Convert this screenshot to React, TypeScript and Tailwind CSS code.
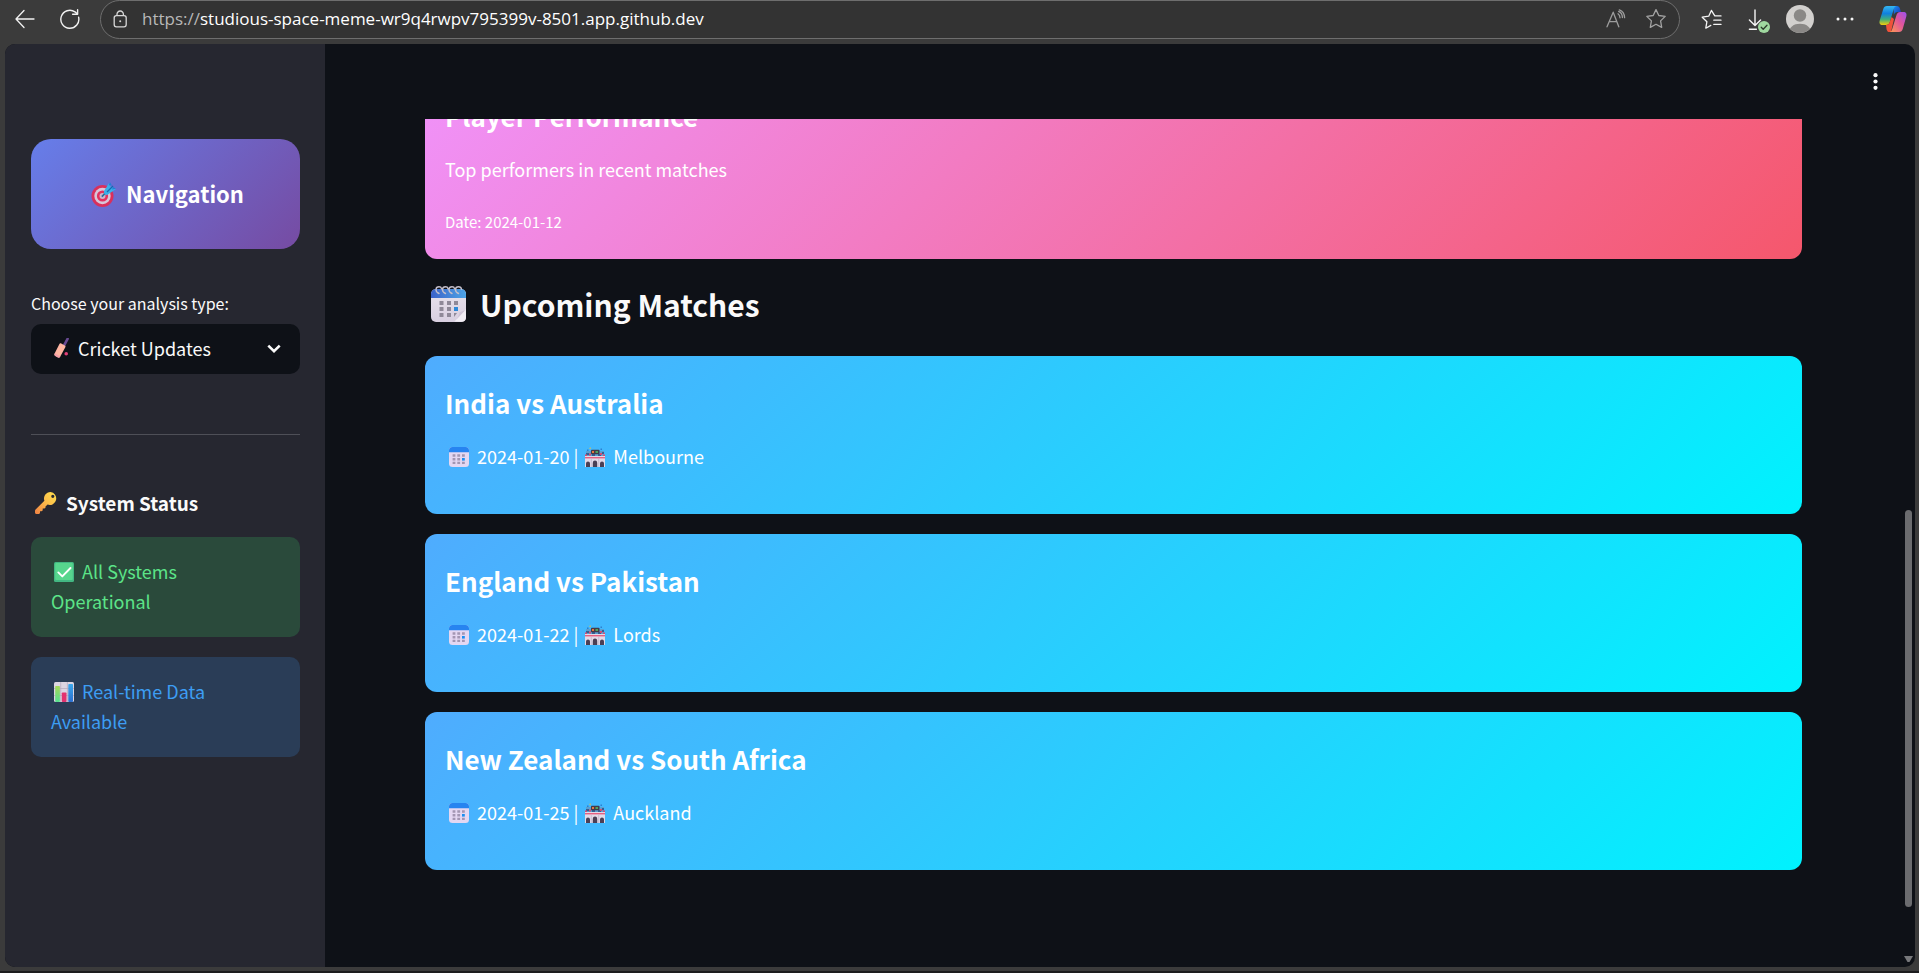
import type { ReactNode } from "react";

const matches = [
  { title: "India vs Australia", date: "2024-01-20", venue: "Melbourne" },
  { title: "England vs Pakistan", date: "2024-01-22", venue: "Lords" },
  { title: "New Zealand vs South Africa", date: "2024-01-25", venue: "Auckland" },
];

const analysisTypes = ["Cricket Updates"];

function BackIcon() {
  return (
    <svg className="size-5" viewBox="0 0 20 20" fill="none" stroke="#f2f2f2" strokeWidth="1.3" strokeLinecap="round" strokeLinejoin="round">
      <path d="M19 10H1.5M9 1.5L1 10l8 8.5" />
    </svg>
  );
}

function ReloadIcon() {
  return (
    <svg className="size-5" viewBox="0 0 20 20" fill="none" stroke="#f2f2f2" strokeWidth="1.4" strokeLinecap="round" strokeLinejoin="round">
      <path d="M18.6 8.2a9 9 0 1 1-3.6-5.3l2.4 2" />
      <path d="M17.6.8v4.4h-5" />
    </svg>
  );
}

function LockIcon() {
  return (
    <svg className="h-[18px] w-4" viewBox="0 0 16 18" fill="none" stroke="#d8d8d8" strokeWidth="1.3">
      <rect x="2.2" y="5.600" width="12" height="11.200" rx="2.200" />
      <path d="M5 5.600V4.200a3.200 3.200 0 0 1 6.400 0v1.400" />
      <circle cx="8.2" cy="11.2" r="1" fill="#d8d8d8" stroke="none" />
    </svg>
  );
}

function ReadAloudIcon() {
  return (
    <svg className="size-5" viewBox="0 0 20 20" fill="none" stroke="#9d9d9d" strokeWidth="1.3" strokeLinecap="round" strokeLinejoin="round">
      <path d="M1 17.8L7.2 3.2l5.6 14.6M3.4 12.6h7.4" />
      <path d="M12 4.8c1.3.9 2 2.2 2 4M12.6 2.4c2.4 1 3.8 3.4 3.8 6.2M13.4.8c3 1 5 3.6 5.2 7.8" />
    </svg>
  );
}

function StarIcon() {
  return (
    <svg className="size-[22px]" viewBox="0 0 22 22" fill="none" stroke="#a2a2a2" strokeWidth="1.3" strokeLinejoin="round">
      <path d="M11 1.6l2.8 5.9 6.4.9-4.6 4.5 1.1 6.5-5.7-3.1-5.7 3.1 1.1-6.5L1.8 8.4l6.4-.9z" />
    </svg>
  );
}

function FavoritesIcon() {
  return (
    <svg className="h-[21px] w-[21px]" viewBox="0 0 21 21" fill="none" stroke="#f5f5f5" strokeWidth="1.3" strokeLinecap="round" strokeLinejoin="round">
      <path d="M20 6.9h-6.2L10.4 1.4 7.7 7.2l-6.5 1 4.7 4.5-1.1 6.5 5-2.8" />
      <path d="M12.8 11.2H20M12.8 15.4H20" />
    </svg>
  );
}

function DownloadIcon() {
  return (
    <svg className="h-6 w-[22px]" viewBox="0 0 22 24" fill="none" strokeLinecap="round" strokeLinejoin="round">
      <path d="M7 1v15.4M1.4 11L7 16.6l5.6-5.6M1.4 20.2h7" stroke="#f5f5f5" strokeWidth="1.4" />
      <circle cx="16" cy="18" r="6" fill="#9fd89f" />
      <path d="M13.2 18.2l2 2 3.8-4" stroke="#2b3b2b" strokeWidth="1.3" />
    </svg>
  );
}

function AvatarIcon() {
  return (
    <svg className="size-7" viewBox="0 0 28 28">
      <defs>
        <clipPath id="avatar"><circle cx="14" cy="14" r="14" /></clipPath>
      </defs>
      <g clipPath="url(#avatar)">
        <rect width="28" height="28" fill="#d2d0ce" />
        <circle cx="14" cy="10.5" r="6.2" fill="#8a8886" />
        <path d="M2.5 28c1-6 5-9.300 11.500-9.300S24.500 22 25.500 28z" fill="#8a8886" />
      </g>
    </svg>
  );
}

function MoreIcon() {
  return (
    <svg className="h-1 w-[18px]" viewBox="0 0 18 4" fill="#f5f5f5">
      <circle cx="2" cy="2" r="1.500" /><circle cx="9" cy="2" r="1.500" /><circle cx="16" cy="2" r="1.500" />
    </svg>
  );
}

function CopilotIcon() {
  return (
    <svg className="size-7" viewBox="0 0 28 28">
      <defs>
        <linearGradient id="cpA" x1="0" y1="0" x2="0" y2="1">
          <stop offset="0" stopColor="#35b7f2" /><stop offset=".4" stopColor="#0f80df" /><stop offset=".7" stopColor="#3fae7c" /><stop offset="1" stopColor="#f5cd0a" />
        </linearGradient>
        <linearGradient id="cpB" x1="1" y1="0" x2="0" y2="1">
          <stop offset="0" stopColor="#9b51f0" /><stop offset=".45" stopColor="#e0559c" /><stop offset="1" stopColor="#ff9a50" />
        </linearGradient>
        <linearGradient id="cpC" x1="0" y1="0" x2="1" y2="1">
          <stop offset="0" stopColor="#1c8ef0" /><stop offset="1" stopColor="#1533b8" />
        </linearGradient>
      </defs>
      <path d="M14.500 1h3.300c1.800 0 2.600 1 3.100 2.600l1 3.400h-3.200c-2.200 0-3.200 1.200-3.800 3z" fill="url(#cpC)" />
      <path d="M8 1h9.200c-1.300.3-2 1.500-2.500 3.200L10.800 17c-.7 2.200-1.900 3-4 3H3.600C.8 20 0 18 .7 15.500L4.200 4.200C4.900 2 6 1 8 1z" fill="url(#cpA)" />
      <path d="M7 20c2.200 0 3.200-1.200 3.800-3l1.700-5 2.500 2-3 13h-1.500c-1.600 0-2.400-1-2.900-2.600z" fill="#f0523a" />
      <path d="M20 27h-9.200c1.300-.3 2-1.500 2.500-3.200L17.200 11c.7-2.800 1.900-4 4-4h3.200c2.800 0 3.600 2 2.900 4.500l-3.500 12.300C23.100 26 22 27 20 27z" fill="url(#cpB)" />
    </svg>
  );
}

function TargetIcon() {
  return (
    <svg className="ml-1 mr-[10px] inline-block size-[25px] align-[-4px]" viewBox="0 0 25 25">
      <circle cx="11.500" cy="14" r="11" fill="#d9305c" />
      <circle cx="11.500" cy="14" r="8.200" fill="#d8c5d8" />
      <circle cx="11.500" cy="14" r="5.600" fill="#e2325f" />
      <circle cx="11.500" cy="14" r="3" fill="#cbb6cc" />
      <path d="M10.800 14.600l6.500-6.500" stroke="#276a9c" strokeWidth="1.600" />
      <path d="M13 9l5.300-8.200 1 3.800L25 7l-8.500 5.800c-2.200.9-4.200-1.300-3.500-3.800z" fill="#3bafe8" />
      <path d="M16 10l6-6" stroke="#1769b1" strokeWidth="1.200" />
      <path d="M21 3.500L19 .3l-1.200 3M22 5l3 1.800-4 .8" fill="#2380d6" />
    </svg>
  );
}

function BatIcon() {
  return (
    <svg className="h-5 w-4" viewBox="0 0 16 20">
      <path d="M10.200 7.200L13.600.8" stroke="#684a92" strokeWidth="2.600" strokeLinecap="round" />
      <path d="M5.300 6.200c.5-1 1.100-1 1.900-.6l3.600 1.900c.8.400.9 1 .5 1.800l-5 9.300c-.5 1-1.500 1.200-2.500.7l-2.500-1.400c-1-.5-1.200-1.400-.7-2.300z" fill="#ffb6a2" />
      <path d="M.9 15.200l5.500 3.200c-.6 1.200-1.500 1.500-2.600 1L1.300 18c-1-.5-1.200-1.400-.4-2.800z" fill="#f3a0aa" />
      <circle cx="12.200" cy="15.800" r="1.800" fill="#e4417a" />
    </svg>
  );
}

function KeyIcon() {
  return (
    <svg className="ml-1 mr-[9px] inline-block size-[22px] align-[-3px]" viewBox="0 0 22 22">
      <defs>
        <linearGradient id="key" x1="1" y1="0" x2="0" y2="1">
          <stop offset="0" stopColor="#ffe14d" /><stop offset=".5" stopColor="#fcb94a" /><stop offset="1" stopColor="#ef8043" />
        </linearGradient>
      </defs>
      <path fillRule="evenodd" d="M15.500 0A6.500 6.500 0 0 0 9.400 8.800L.6 17.600a2 2 0 0 0-.6 1.500v1.400C0 21.400.6 22 1.500 22h2c.9 0 1.500-.6 1.500-1.500v-1.200h1.500c.7 0 1.200-.5 1.200-1.200v-1.600h1.600c.8 0 1.200-.5 1.200-1.200v-.7l2.100-2A6.500 6.500 0 1 0 15.500 0zm2.300 2.700a1.600 1.600 0 1 1 0 3.200 1.600 1.600 0 0 1 0-3.200z" fill="url(#key)" />
    </svg>
  );
}

function CheckIcon() {
  return (
    <svg className="ml-[3px] mr-2 inline-block size-5 align-[-3px]" viewBox="0 0 20 20">
      <rect width="20" height="20" rx="1.500" fill="#43b783" />
      <rect x="1.200" y="1" width="17.600" height="17" rx="1" fill="#57d68d" />
      <path d="M4.300 10.400l4 4L16.500 6" fill="none" stroke="#fff" strokeWidth="1.900" strokeLinecap="round" strokeLinejoin="round" />
    </svg>
  );
}

function ChartIcon() {
  return (
    <svg className="ml-[3px] mr-2 inline-block size-5 align-[-3px]" viewBox="0 0 20 20">
      <defs>
        <linearGradient id="barG" x1="0" y1="0" x2="0" y2="1"><stop offset="0" stopColor="#a6d957" /><stop offset="1" stopColor="#55e090" /></linearGradient>
        <linearGradient id="barB" x1="0" y1="0" x2="0" y2="1"><stop offset="0" stopColor="#3ba8ec" /><stop offset="1" stopColor="#2b6fd0" /></linearGradient>
      </defs>
      <rect width="20" height="20" rx="1.500" fill="#dcd5e2" />
      <path d="M0 6.500h20M0 13.500h20M6.700 0v20M13.400 0v20" stroke="#b5a9bd" strokeWidth=".7" />
      <rect x="1.200" y="4" width="4.700" height="16" rx=".8" fill="url(#barG)" />
      <rect x="7.800" y="10.500" width="4.700" height="9.500" rx=".8" fill="#e2326f" />
      <rect x="14.300" y="2" width="4.700" height="18" rx=".8" fill="url(#barB)" />
    </svg>
  );
}

function SpiralCalendarIcon() {
  return (
    <svg className="ml-[6px] mr-[14px] inline-block h-9 w-[35px] align-[-5px]" viewBox="0 0 35 36">
      <defs>
        <linearGradient id="spiral" x1="0" y1="0" x2="1" y2="0"><stop offset="0" stopColor="#3c62c9" /><stop offset="1" stopColor="#4da4e6" /></linearGradient>
        <linearGradient id="paper" x1="0" y1="0" x2="0" y2="1"><stop offset="0" stopColor="#e9e3ec" /><stop offset="1" stopColor="#d8cfe0" /></linearGradient>
      </defs>
      <path d="M0 8a5 5 0 0 1 5-5h25a5 5 0 0 1 5 5v23a5 5 0 0 1-5 5H5a5 5 0 0 1-5-5z" fill="url(#paper)" />
      <path d="M0 12V8a5 5 0 0 1 5-5h25a5 5 0 0 1 5 5v4z" fill="url(#spiral)" />
      <path d="M34.800 23L23.500 35.500 31 35.800a4.500 4.500 0 0 0 4-4.500z" fill="#f1edf4" />
      <path d="M34.500 24l-6 2.200c-.4 3-1.800 6-5 9.300z" fill="#cfc5d7" />
      <g fill="#8f8998">
        <path d="M8.500 15h4v4h-4zM16 15h4v4h-4zM23 15h4v4h-4zM8.500 21h4v4h-4zM16 21h4v4h-4zM8.500 27h4v4h-4zM16 27h4v4h-4zM23 27h3l-3 4z" />
      </g>
      <rect x="23" y="21" width="4" height="4" fill="#2f8ad8" />
      <g fill="none" stroke="#c5bfca" strokeWidth="1.400" strokeLinecap="round">
        <path d="M8 7.500C3.500 5.500 4.500.8 8 .8c1.500 0 2.300.8 2.600 1.900M14.500 7.500c-4.500-2-3.500-6.700 0-6.700 1.500 0 2.300.8 2.600 1.900M21 7.500c-4.500-2-3.500-6.700 0-6.700 1.500 0 2.300.8 2.600 1.900M27.500 7.500c-4.500-2-3.500-6.700 0-6.700 1.500 0 2.800 1 3 2.400" />
      </g>
    </svg>
  );
}

function CalendarIcon() {
  return (
    <svg className="ml-1 mr-2 inline-block size-5 align-[-3px]" viewBox="0 0 20 20">
      <rect width="20" height="20" rx="3.500" fill="#e4d7f2" />
      <path d="M0 5.300V3.500A3.500 3.500 0 0 1 3.500 0h13A3.500 3.500 0 0 1 20 3.500v1.800z" fill="#2784f0" />
      <path d="M3.600 7.200h2.800v2.600H3.600zM8.300 7.200h2.800v2.600H8.300zM13 7.200h2.800v2.600H13zM3.600 11h2.800v2.600H3.600zM8.300 11h2.800v2.600H8.300zM3.600 14.800h2.800v2.300H3.600zM8.300 14.800h2.800v2.300H8.300zM13 14.800h2.800v2.300H13z" fill="#a396b3" />
      <path d="M13 11h2.800v2.600H13z" fill="#1b8ef0" />
    </svg>
  );
}

function StadiumIcon() {
  return (
    <svg className="ml-[3px] mr-2 inline-block size-5 align-[-3px]" viewBox="0 0 20 20">
      <path d="M1 4h18v6H1z" fill="#5a9fd0" />
      <path d="M1 6h3v2H1zM7 7h3v2H7zM13 7h3v2h-3zM17 5h2v2h-2z" fill="#365f92" />
      <path d="M0 7.500h2v2H0zM4 6.500h2v2H4zM15 6h2v2h-2zM18 7.500h2v2h-2z" fill="#d34c75" />
      <rect x="6" y="2.700" width="8.500" height="4.500" rx=".8" fill="#443b49" />
      <path d="M7 4h2v2H7z" fill="#e7743f" />
      <path d="M10.500 4h2.500v2h-2.500z" fill="#50a35f" />
      <path d="M4 1.300l1.500-1 .3 2z" fill="#f3be38" />
      <path d="M2 2.500h1.500V4H2zM15.500 1.500H17V3h-1.500z" fill="#2c7fd0" />
      <rect y="9" width="20" height="11" fill="#e3dae8" />
      <rect y="10" width="20" height="1.400" fill="#e65f80" />
      <path d="M1 20v-3.500a2 2 0 0 1 4 0V20zM7.800 20v-4.200a2.200 2.200 0 0 1 4.400 0V20zM15 20v-3.500a2 2 0 0 1 4 0V20z" fill="#4b3f55" />
      <path d="M6.300 12v8M13.700 12v8" stroke="#c0b3c8" strokeWidth=".7" />
    </svg>
  );
}

function IconButton({ label, className = "", children }: { label: string; className?: string; children: ReactNode }) {
  return (
    <button type="button" aria-label={label} className={`flex shrink-0 items-center justify-center ${className}`}>
      {children}
    </button>
  );
}

function BrowserBar() {
  return (
    <header className="flex h-11 shrink-0 items-start bg-[#3b3b3b]">
      <IconButton label="Back" className="ml-[15px] mt-2 h-[22px] w-5"><BackIcon /></IconButton>
      <IconButton label="Reload" className="ml-[25px] mt-2 h-[22px] w-5"><ReloadIcon /></IconButton>
      <div className="ml-5 flex h-[39px] min-w-0 flex-1 items-center rounded-full border border-[#6e6e6e] bg-[#333333] pb-[2px] pl-[11px] pr-3">
        <LockIcon />
        <p className="ml-[14px] min-w-0 flex-1 truncate font-['Open_Sans',sans-serif] text-[17px] leading-6 text-white">
          <span className="text-[#b8b8b8]">https://</span>studious-space-meme-wr9q4rwpv795399v-8501.app.github.dev
        </p>
        <IconButton label="Read aloud"><ReadAloudIcon /></IconButton>
        <IconButton label="Add to favorites" className="ml-[19px]"><StarIcon /></IconButton>
      </div>
      <div className="flex h-[38px] items-center pl-[21px] pr-3">
        <IconButton label="Favorites"><FavoritesIcon /></IconButton>
        <IconButton label="Downloads" className="ml-[26px] mt-1"><DownloadIcon /></IconButton>
        <IconButton label="Profile" className="ml-[16px]"><AvatarIcon /></IconButton>
        <IconButton label="More" className="ml-[22px]"><MoreIcon /></IconButton>
        <IconButton label="Copilot" className="ml-[25px]"><CopilotIcon /></IconButton>
      </div>
    </header>
  );
}

function Sidebar() {
  return (
    <aside className="w-80 shrink-0 bg-[#262730] pl-[26px] pr-[25px] pt-[95px] text-[#fafafa]">
      <div className="flex h-[110px] items-center justify-center rounded-[20px] bg-[linear-gradient(135deg,#667eea_0%,#764ba2_100%)] pb-[2px]">
        <h3 className="text-[22px] font-bold leading-7 text-white"><TargetIcon />Navigation</h3>
      </div>
      <label htmlFor="analysis" className="mt-[42px] block text-base leading-6">Choose your analysis type:</label>
      <div className="relative mt-[9px]">
        <select id="analysis" className="h-[50px] w-full appearance-none rounded-[10px] bg-[#0e1117] pb-[2px] pl-[47px] pr-10 text-lg text-[#fafafa]">
          {analysisTypes.map((type) => <option key={type}>{type}</option>)}
        </select>
        <span className="pointer-events-none absolute left-[23px] top-[14px]"><BatIcon /></span>
        <svg className="pointer-events-none absolute right-[19px] top-5 h-[10px] w-[14px]" viewBox="0 0 14 10" fill="none" stroke="#fafafa" strokeWidth="2.600">
          <path d="M1.300 1.600L7 7.200l5.700-5.600" />
        </svg>
      </div>
      <hr className="mt-[60px] border-[#4e4f57]" />
      <h3 className="mt-[54px] text-[19px] font-bold leading-7"><KeyIcon />System Status</h3>
      <p className="mt-5 rounded-[10px] bg-[#2a4a3b] px-5 pb-[21px] pt-[19px] text-lg leading-[30px] text-[#5ce488]">
        <CheckIcon />All Systems<br />Operational
      </p>
      <p className="mt-5 rounded-[10px] bg-[#2a3d57] px-5 pb-[21px] pt-[19px] text-lg leading-[30px] text-[#3d9df3]">
        <ChartIcon />Real-time Data<br />Available
      </p>
    </aside>
  );
}

export default function App() {
  return (
    <div className="flex h-screen flex-col bg-[#3b3b3b] font-['Noto_Sans_CJK_SC',sans-serif]">
      <BrowserBar />
      <div className="mx-1 ml-[5px] flex min-h-0 flex-1 overflow-hidden rounded-[10px] bg-[#0e1117]">
        <Sidebar />
        <main className="flex min-w-0 flex-1 flex-col">
          <div className="flex h-[75px] shrink-0 justify-end pr-[30px] pt-[27px]">
            <button type="button" aria-label="Main menu" className="size-5">
              <svg className="size-5" viewBox="0 0 20 20" fill="#fafafa">
                <circle cx="10.500" cy="4.200" r="2.100" /><circle cx="10.500" cy="10.500" r="2.100" /><circle cx="10.500" cy="16.800" r="2.100" />
              </svg>
            </button>
          </div>
          <div className="flex min-h-0 flex-1">
            <div className="min-w-0 flex-1 overflow-hidden pl-[100px] pr-[100px]">
              <article className="-mt-[50px] h-[190px] rounded-xl bg-[linear-gradient(135deg,#f093fb_0%,#f5576c_100%)] px-5 pt-[29px] text-white">
                <h3 className="text-[26px] font-bold leading-9">Player Performance</h3>
                <p className="mt-5 text-lg leading-[30px]">Top performers in recent matches</p>
                <p className="mt-[26px] text-[15px] leading-6">Date: 2024-01-12</p>
              </article>
              <h2 className="mb-[29px] mt-[22px] text-[30px] font-bold leading-[46px] text-[#fafafa]"><SpiralCalendarIcon />Upcoming Matches</h2>
              <div className="flex flex-col gap-5">
                {matches.map((match) => (
                  <article key={match.title} className="h-[158px] rounded-xl bg-[linear-gradient(135deg,#4facfe_0%,#00f2fe_100%)] px-5 pt-[29px] text-white">
                    <h3 className="text-[26px] font-bold leading-9">{match.title}</h3>
                    <p className="mt-5 text-lg leading-[30px]">
                      <CalendarIcon />{match.date} | <StadiumIcon />{match.venue}
                    </p>
                  </article>
                ))}
              </div>
            </div>
            <div className="flex w-[13px] shrink-0 flex-col items-center justify-end gap-[49px] pb-[5px]">
              <div className="h-[397px] w-[7px] rounded-full bg-[#6b6c6f]" />
              <svg className="h-[6px] w-[9px]" viewBox="0 0 9 6" fill="#77787b"><path d="M0 0h9L5.500 6h-2z" /></svg>
            </div>
          </div>
        </main>
      </div>
      <div className="h-[6px] shrink-0 border-b-2 border-[#1c1c1e]" />
    </div>
  );
}
